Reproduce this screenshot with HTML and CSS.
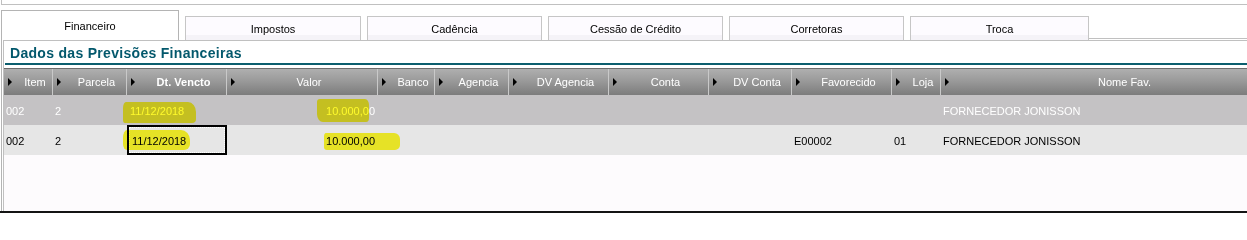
FILE: index.html
```html
<!DOCTYPE html>
<html lang="pt-BR">
<head>
<meta charset="utf-8">
<title>Dados das Previsões Financeiras</title>
<link rel="stylesheet" href="styles.css">
</head>
<body>
<div class="topbar"></div>
<div class="workspace">
  <div class="tabs">
    <div class="tab active">Financeiro</div>
    <div class="tab first">Impostos</div>
    <div class="tab">Cadência</div>
    <div class="tab">Cessão de Crédito</div>
    <div class="tab">Corretoras</div>
    <div class="tab wide">Troca</div>
    <div class="tab-fill"></div>
  </div>
  <div class="panel">
    <div class="panel-inner">
      <div class="title">Dados das Previsões Financeiras</div>
      <div class="grid">
        <div class="row head">
          <div class="h"><span>Item</span></div>
          <div class="h"><span>Parcela</span></div>
          <div class="h bold"><span>Dt. Vencto</span></div>
          <div class="h"><span>Valor</span></div>
          <div class="h"><span>Banco</span></div>
          <div class="h"><span>Agencia</span></div>
          <div class="h"><span>DV Agencia</span></div>
          <div class="h"><span>Conta</span></div>
          <div class="h"><span>DV Conta</span></div>
          <div class="h"><span>Favorecido</span></div>
          <div class="h"><span>Loja</span></div>
          <div class="h"><span>Nome Fav.</span></div>
        </div>
        <div class="row data sel">
          <div class="c">002</div>
          <div class="c">2</div>
          <div class="c">11/12/2018</div>
          <div class="c num">10.000,00</div>
          <div class="c"></div>
          <div class="c"></div>
          <div class="c"></div>
          <div class="c"></div>
          <div class="c"></div>
          <div class="c"></div>
          <div class="c"></div>
          <div class="c">FORNECEDOR JONISSON</div>
          <span class="hl hl-1a"></span>
          <span class="hl hl-1b"></span>
        </div>
        <div class="row data alt">
          <div class="c">002</div>
          <div class="c">2</div>
          <div class="c focus">11/12/2018</div>
          <div class="c num">10.000,00</div>
          <div class="c"></div>
          <div class="c"></div>
          <div class="c"></div>
          <div class="c"></div>
          <div class="c"></div>
          <div class="c">E00002</div>
          <div class="c">01</div>
          <div class="c">FORNECEDOR JONISSON</div>
          <span class="hl hl-2a"></span>
          <span class="hl hl-2b"></span>
        </div>
        <div class="empty"></div>
      </div>
    </div>
  </div>
</div>
</body>
</html>
```
FILE: styles.css
```css
html, body {
  margin: 0;
  padding: 0;
  background: #ffffff;
  overflow: hidden;
}
body {
  width: 1247px;
  height: 213px;
  font-family: "Liberation Sans", Arial, sans-serif;
  font-size: 11px;
  color: #000;
}
.topbar {
  height: 4px;
  margin-left: 1px;
  border-left: 1px solid #c0c0c0;
  border-bottom: 1px solid #c0c0c0;
}
.workspace {
  height: 206px;
  padding-left: 1px;
  border-bottom: 2px solid #141414;
  display: flex;
  flex-direction: column;
}
.tabs {
  height: 35px;
  display: flex;
  align-items: flex-end;
}
.tab {
  box-sizing: border-box;
  width: 175px;
  height: 24px;
  margin-left: 6px;
  border: 1px solid #c6c6c6;
  border-bottom: none;
  background: linear-gradient(#fdfbff 0, #fdfbff 18px, #f5f3f8 18px, #f5f3f8 100%);
  text-align: center;
  line-height: 14px;
  padding-top: 5px;
  white-space: nowrap;
}
.tab.first {
  width: 176px;
}
.tab.active {
  width: 178px;
  height: 30px;
  margin-left: 0;
  padding-top: 8px;
  border-color: #b4b4b4;
  background: #ffffff;
}
.tab.wide {
  width: 179px;
}
.tab-fill {
  flex: 1;
  height: 0;
  margin-bottom: 1px;
  border-bottom: 1px solid #c0c0c0;
}
.panel {
  flex: 1;
  display: flex;
  border-left: 1px solid #b4b4b4;
}
.panel-inner {
  flex: 1;
  min-width: 0;
  margin-left: 1px;
  border-left: 1px solid #c0c0c0;
  border-top: 1px solid #c0c0c0;
  display: flex;
  flex-direction: column;
  overflow: hidden;
}
.title {
  height: 24px;
  box-sizing: border-box;
  padding: 2px 0 0 5px;
  line-height: 20px;
  font-size: 14px;
  font-weight: bold;
  letter-spacing: 0.3px;
  color: #03586c;
  margin-left: 1px;
  border-bottom: 2px solid #0b5e6e;
  white-space: nowrap;
}
.grid {
  flex: 1;
  margin-top: 3px;
  display: flex;
  flex-direction: column;
}
.row {
  display: grid;
  grid-template-columns: 49px 74px 100px 151px 57px 74px 100px 100px 83px 100px 49px 354px;
  position: relative;
}
.head {
  height: 27px;
  box-sizing: border-box;
  border-top: 1px solid #6c6c6c;
  background: linear-gradient(#afafaf, #9a9a9a 45%, #7c7c7c);
  color: #ffffff;
}
.h {
  display: flex;
  align-items: center;
  padding-left: 4px;
  border-right: 1px solid #c9c9c9;
  line-height: 26px;
  white-space: nowrap;
  overflow: hidden;
}
.h::before {
  content: "";
  flex: none;
  width: 0;
  height: 0;
  border-left: 4px solid #000;
  border-top: 4px solid transparent;
  border-bottom: 4px solid transparent;
  margin-right: 6px;
}
.h span {
  flex: 1;
  text-align: center;
}
.h.bold {
  font-weight: bold;
}
.data {
  height: 30px;
}
.sel {
  background: #c4c2c4;
  color: #ffffff;
}
.alt {
  background: #e6e6e6;
  color: #000000;
}
.c {
  box-sizing: border-box;
  height: 30px;
  padding: 2px 2px 0 2px;
  line-height: 28px;
  white-space: nowrap;
  overflow: hidden;
}
.c:nth-child(3) {
  padding-left: 3px;
}
.c.num {
  text-align: right;
  padding-right: 3px;
}
.c.focus {
  border: 2px solid #000;
  outline: 1px dotted #ffffff;
  outline-offset: -3px;
  padding: 0 2px 0 3px;
  line-height: 28px;
}
.hl {
  position: absolute;
  background: #fffb2a;
  mix-blend-mode: multiply;
  pointer-events: none;
}
.hl-1a {
  left: 119px;
  top: 7px;
  width: 73px;
  height: 21px;
  border-radius: 3px 8px 4px 2px / 6px 10px 4px 3px;
}
.hl-1b {
  left: 313px;
  top: 4px;
  width: 52px;
  height: 23px;
  border-radius: 3px 4px 3px 6px / 3px 6px 4px 8px;
}
.hl-2a {
  left: 119px;
  top: 5px;
  width: 67px;
  height: 20px;
  border-radius: 4px 9px 6px 4px / 8px 10px 6px 6px;
}
.hl-2b {
  left: 320px;
  top: 8px;
  width: 76px;
  height: 17px;
  border-radius: 2px 6px 5px 3px / 4px 6px 5px 3px;
}
.empty {
  flex: 1;
  background: #fdfbfd;
}
```
